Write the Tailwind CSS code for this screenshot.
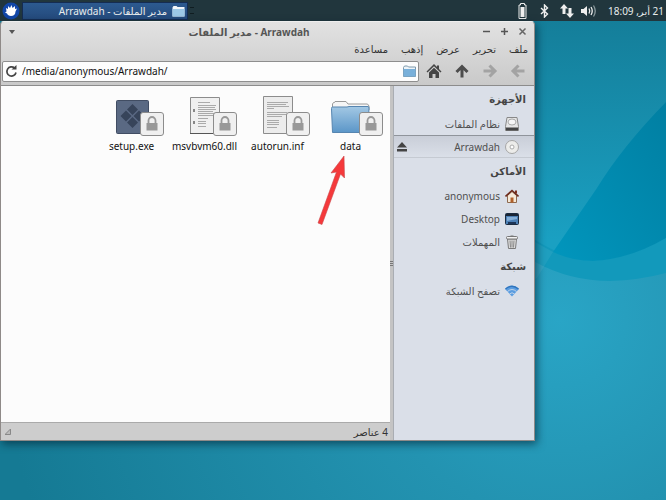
<!DOCTYPE html>
<html lang="ar">
<head>
  <meta charset="UTF-8" />
  <meta name="viewport" content="width=device-width, initial-scale=1.0" />
  <title>Arrawdah - مدير الملفات</title>
  <script src="https://cdn.jsdelivr.net/npm/@tailwindcss/browser@4"></script>
</head>
<body class="relative min-h-screen flex flex-col overflow-hidden bg-[#1c8eac] text-[10px] leading-4 font-['Noto_Sans','DejaVu_Sans',sans-serif]">

  <!-- wallpaper -->
  <svg class="absolute inset-0 w-full h-full" viewBox="0 0 666 500" preserveAspectRatio="none" aria-hidden="true">
    <defs>
      <linearGradient id="sky" x1="0" y1="0" x2="0" y2="1">
        <stop offset="0" stop-color="#147b96" />
        <stop offset="0.48" stop-color="#1aa0c2" />
        <stop offset="1" stop-color="#1aa0c2" />
      </linearGradient>
      <radialGradient id="sea" gradientUnits="userSpaceOnUse" cx="560" cy="320" r="560">
        <stop offset="0" stop-color="#29a5c6" />
        <stop offset="0.35" stop-color="#2393b1" />
        <stop offset="1" stop-color="#157a94" />
      </radialGradient>
      <linearGradient id="lens" x1="1" y1="0" x2="0" y2="1">
        <stop offset="0" stop-color="#017fa2" />
        <stop offset="1" stop-color="#0196bd" />
      </linearGradient>
      <linearGradient id="folder" x1="0" y1="0" x2="0" y2="1">
        <stop offset="0" stop-color="#a3c8e4" />
        <stop offset="1" stop-color="#5b96c8" />
      </linearGradient>
    </defs>
    <rect width="666" height="500" fill="url(#sky)" />
    <path d="M0 240H535Q570 261 593 261Q630 258 666 238V500H0Z" fill="#1299bb" />
    <path d="M0 262H535Q570 281 610 281Q640 280 666 273V500H0Z" fill="url(#sea)" />
    <path d="M666 102Q622 147 597 188L553 252Q572 261 593 261Q630 259 666 238Z" fill="url(#lens)" />
    <path d="M535 242L553 252L537 278L535 279Z" fill="#fff" opacity="0.06" />
  </svg>

  <!-- panel -->
  <header dir="ltr" class="relative flex h-[21px] items-center bg-[#21363d] text-[#e8ecec]">
    <button aria-label="Menu" class="ml-[2px] w-[18px] h-[18px]">
      <svg viewBox="0 0 18 18">
        <circle cx="9" cy="9" r="8.500" fill="#1147a8" />
        <path d="M4 6l2 1 0-3 2 2 1.500-3 1 3 2.500-2 0 3 2-.5-1.500 3c0 3-2 4.500-4.500 4.500-2 0-3.500-1-4-2.500l-2-1 1.500-1z" fill="#fff" />
      </svg>
    </button>
    <button class="ml-[2px] flex h-[18px] w-[166px] items-center justify-end gap-[5px] border border-[#152c52] bg-linear-to-b from-[#2c5a90] to-[#244a7c] pr-[2px]">
      <span dir="ltr">Arrawdah - مدير الملفات</span>
      <svg class="w-[13px] h-[12px]" viewBox="0 0 13 12">
        <path d="M.5 11.500V2.500L1.500 1h3l1 1h7v9.500z" fill="#f2f6fa" />
        <path d="M.5 4h12v7.500H.5z" fill="#9cc8e6" />
      </svg>
    </button>
    <span class="ml-[2px] w-[4px] h-[7px] border-y border-[#101d21]"></span>

    <div class="ml-auto flex items-center pr-[2px]">
      <svg class="w-[9px] h-4 mr-[13px]" viewBox="0 0 9 16">
        <path d="M2.500 .5h4v1.500h1.500v13.500H1V2h1.500z" fill="none" stroke="#eee" />
        <path d="M2.500 4h4v10h-4z" fill="#eee" />
      </svg>
      <svg class="w-[9px] h-[14px] mr-[11px]" viewBox="0 0 9 14">
        <path d="M1 4l6.500 6L4.500 13V1l3 3L1 10" fill="none" stroke="#eee" stroke-width="1.400" />
      </svg>
      <svg class="w-[14px] h-[14px] mr-[7px]" viewBox="0 0 14 14">
        <path d="M4 0l4 4.500H5.500V10h-3V4.500H0zM10 14L6 9.500h2.500V4h3v5.500H14z" fill="#eee" />
      </svg>
      <svg class="w-[16px] h-[12px] mr-[11px]" viewBox="0 0 16 12" fill="none" stroke-width="1.300">
        <path d="M0 4h2.500L6 1v10L2.500 8H0z" fill="#eee" />
        <path d="M8 3.500q1.500 2.500 0 5M10 2q2.500 4 0 8" stroke="#eee" />
        <path d="M12.500 .5q3.500 5.500 0 11" stroke="#8b999d" />
      </svg>
      <time dir="rtl">21 أبر, 18:09</time>
    </div>
  </header>

  <!-- desktop area with the file manager window -->
  <main class="relative flex flex-1 pr-[131px] pb-[59px]">
    <section dir="rtl" class="flex flex-1 flex-col rounded-t-[4px] border border-t-[#eee] border-[#8f8a88] bg-[#cdcdcd] shadow-[2px_3px_9px_rgba(0,30,45,.6)] text-[#333]">
      <div class="rounded-t-[4px] bg-linear-to-b from-[#e2e2e2] to-[#c9c9c9]">
        <!-- title bar -->
        <div class="flex h-[19px] items-center justify-between px-[7px] text-[#555]">
          <div class="flex items-center gap-[9px]">
            <button aria-label="إغلاق"><svg class="w-[9px] h-[9px]" viewBox="0 0 9 9"><path d="M1.500 1.500l6 6m0-6l-6 6" stroke="#666" stroke-width="1.500" /></svg></button>
            <button aria-label="تكبير"><svg class="w-[9px] h-[9px]" viewBox="0 0 9 9"><path d="M1 4.500h7M4.500 1v7" stroke="#555" stroke-width="1.500" /></svg></button>
            <button aria-label="تصغير"><svg class="w-[9px] h-[9px]" viewBox="0 0 9 9"><path d="M1 4.500h7" stroke="#555" stroke-width="1.500" /></svg></button>
          </div>
          <h1 class="font-bold">Arrawdah - مدير الملفات</h1>
          <button aria-label="قائمة النافذة"><svg class="w-[8px] h-[8px]" viewBox="0 0 8 8"><path d="M1 2h6L4 6z" fill="#555" /></svg></button>
        </div>
        <!-- menu bar -->
        <nav class="flex h-4 items-center gap-[13px] pr-[6px]">
          <button>ملف</button>
          <button>تحرير</button>
          <button>عرض</button>
          <button>إذهب</button>
          <button>مساعدة</button>
        </nav>
        <!-- toolbar -->
        <div class="flex h-[29px] items-center border-b border-[#8c8c8c] pr-[8px] pl-px">
          <div class="flex items-center gap-[12px]">
            <button aria-label="السابق"><svg class="w-4 h-4" viewBox="0 0 16 16"><path d="M14.500 8H4M8.500 2.500L3 8l5.500 5.500" fill="none" stroke="#a3a3a3" stroke-width="3" /></svg></button>
            <button aria-label="التالي"><svg class="w-4 h-4" viewBox="0 0 16 16"><path d="M1.500 8H12M7.500 2.500L13 8l-5.500 5.500" fill="none" stroke="#a3a3a3" stroke-width="3" /></svg></button>
            <button aria-label="أعلى"><svg class="w-4 h-4" viewBox="0 0 16 16"><path d="M8 14.500V4M2.500 9L8 3.500 13.500 9" fill="none" stroke="#4d4d4d" stroke-width="3" /></svg></button>
            <button aria-label="المنزل"><svg class="w-4 h-4" viewBox="0 0 16 16"><path d="M8 1L0.500 8.500l1 1L8 3.200l6.500 6.300 1-1L13 6V2.500h-2V4zM3 9.500L8 4.800l5 4.700V15H9.500v-4h-3v4H3z" fill="#454545" /></svg></button>
          </div>
          <div dir="ltr" class="mr-[7px] flex h-[21px] flex-1 items-center rounded-[2px] border border-[#8e8e8e] bg-[#fdfdfd] px-[2px]">
            <svg class="w-[13px] h-[13px] shrink-0" viewBox="0 0 13 13"><path d="M9.500 3A4.600 4.600 0 1 0 11 7.500" fill="none" stroke="#444" stroke-width="1.700" /><path d="M6.500 4.500h5V0z" fill="#444" /></svg>
            <input type="text" aria-label="المسار" value="/media/anonymous/Arrawdah/" class="ml-[4px] min-w-0 flex-1 bg-transparent text-[#111] outline-none" />
            <svg class="w-[13px] h-[12px]" viewBox="0 0 13 12">
              <path d="M.5 11.500V2.500L1.500 1h3l1 1h7v9.500z" fill="#eef4f8" stroke="#7d98ab" />
              <path d="M.5 4h12v7.500H.5z" fill="#79b0da" />
            </svg>
          </div>
        </div>
      </div>

      <div class="flex flex-1">
        <!-- places -->
        <aside class="w-[141px] shrink-0 border-l border-[#a9adb3] bg-[#dadfe8] text-[#505050]">
          <h2 class="flex h-[26px] items-center pr-[8px] font-bold text-[#444]">الأجهزة</h2>
          <ul>
            <li class="flex h-[23px] items-center gap-[5px] pr-[15px]">
              <svg class="w-[14px] h-[14px]" viewBox="0 0 14 14"><path d="M2 .5h10l1.500 9v4H.5v-4z" fill="#e6e6e6" stroke="#888" /><ellipse cx="7" cy="5" rx="4" ry="3" fill="#f6f6f6" stroke="#aaa" /><path d="M1 10.500h12v3H1z" fill="#444" /></svg>
              <a href="#">نظام الملفات</a>
            </li>
            <li class="flex h-[23px] items-center gap-[5px] border-t border-b border-t-[#8f949b] border-b-[#c5cad2] bg-linear-to-b from-[#c9ced8] to-[#dadfe8] pr-[15px] pl-[3px]">
              <svg class="w-[14px] h-[14px]" viewBox="0 0 14 14"><circle cx="7" cy="7" r="6.500" fill="#ececea" stroke="#a5a5a5" /><circle cx="7" cy="7" r="2" fill="#fff" stroke="#aaa" /></svg>
              <a href="#">Arrawdah</a>
              <button aria-label="إخراج" class="mr-auto"><svg class="w-[10px] h-[10px]" viewBox="0 0 10 10"><path d="M5 0l5 5.500H0zM0 7h10v2.500H0z" fill="#444" /></svg></button>
            </li>
          </ul>
          <h2 class="flex h-[26px] items-center pr-[8px] font-bold text-[#444]">الأماكن</h2>
          <ul>
            <li class="flex h-[23px] items-center gap-[5px] pr-[15px]">
              <svg class="w-[14px] h-[14px]" viewBox="0 0 14 14"><path d="M2.500 6.500L7 2.500l4.500 4v7h-9z" fill="#f5e9d8" stroke="#8d6a50" /><path d="M10 1.500h2v3h-2z" fill="#7c2f1d" /><path d="M.5 7.500L7 1.500l6.500 6" fill="none" stroke="#6e2b1c" stroke-width="1.600" /><path d="M5.500 8.500h3v5h-3z" fill="#b0602b" /></svg>
              <a href="#">anonymous</a>
            </li>
            <li class="flex h-[23px] items-center gap-[5px] pr-[15px]">
              <svg class="w-[14px] h-[12px]" viewBox="0 0 14 12"><rect x=".5" y=".5" width="13" height="11" rx="1" fill="#4b7fb5" stroke="#1c2c40" /><path d="M1 1h12v2H1z" fill="#1a2535" /><path d="M3 9h8v2H3z" fill="#1d3557" /><path d="M2 4h10v2L2 8z" fill="#85afd8" /></svg>
              <a href="#">Desktop</a>
            </li>
            <li class="flex h-[23px] items-center gap-[5px] pr-[15px]">
              <svg class="w-[14px] h-[14px]" viewBox="0 0 14 14"><path d="M2.500 4h9l-1 9.500h-7z" fill="#ddd" stroke="#7a7a7a" /><path d="M5 5.500l.5 7M7 5.500v7M9 5.500l-.5 7" stroke="#888" /><rect x="1.500" y="1.500" width="11" height="2.500" rx="1" fill="#f2f2f2" stroke="#777" /><path d="M5.500 1h3" stroke="#777" /></svg>
              <a href="#">المهملات</a>
            </li>
          </ul>
          <h2 class="flex h-[26px] items-center pr-[8px] font-bold text-[#444]">شبكة</h2>
          <ul>
            <li class="flex h-[23px] items-center gap-[5px] pr-[15px]">
              <svg class="w-[14px] h-[12px]" viewBox="0 0 14 12"><path d="M0 4Q7-2.500 14 4L7 11.500z" fill="#5b9de0" /><path d="M.5 4Q7-1.500 13.500 4" fill="none" stroke="#2f75bf" stroke-width="1.500" /><path d="M2.500 6.500Q7 2.500 11.500 6.500M4.500 9Q7 6.500 9.500 9" fill="none" stroke="#dadfe8" stroke-width=".8" /></svg>
              <a href="#">تصفح الشبكة</a>
            </li>
          </ul>
        </aside>

        <!-- pane handle -->
        <div class="flex w-[3px] shrink-0 flex-col items-center justify-center gap-px bg-[#c4c4c4]">
          <span class="h-px w-full bg-[#777]"></span>
          <span class="h-px w-full bg-[#777]"></span>
          <span class="h-px w-full bg-[#777]"></span>
        </div>

        <div class="flex min-w-0 flex-1 flex-col">
          <div class="relative flex-1 border-b border-[#aaa] bg-[#fcfcfc]">
            <ul class="flex flex-wrap pt-[10px] pr-[3px] text-[#111]">
              <li class="flex w-[73px] flex-col items-center">
                <div class="relative h-[42px] w-[48px]">
                  <svg class="w-[48px] h-[42px]" viewBox="0 0 48 42">
                    <path d="M5.500 12V8l1-1.500h1L8 5.500h11l2 2.500h19.500l1.500 2v4H5.500z" fill="#f6f6f6" stroke="#9a9a9a" />
                    <path d="M4.500 12.500q0-1.500 1-1.500H20l2-.5h19q1 0 1 1.500l-1 24.500H5.500z" fill="url(#folder)" stroke="#5685b0" />
                  </svg>
                  <svg class="absolute top-[16px] right-[-8px] w-6 h-6" viewBox="0 0 24 24"><rect x=".5" y=".5" width="23" height="23" rx="2.500" fill="#f0f0f0" stroke="#8c8c8c" /><path d="M8.500 11V8.500a3.500 3.500 0 0 1 7 0V11" fill="none" stroke="#999" stroke-width="1.800" /><path d="M6.500 11h11v7.500h-11z" fill="#989898" /></svg>
                </div>
                <a href="#">data</a>
              </li>
              <li class="flex w-[73px] flex-col items-center">
                <div class="relative h-[42px] w-[48px]">
                  <svg class="w-[48px] h-[42px]" viewBox="0 0 48 42">
                    <path d="M9.500 .5h29v37h-29z" fill="#ececec" stroke="#8c8c8c" />
                    <path d="M13 6.500h21M13 8.500h19M13 10.500h22M13 12.500h7M13 16.500h20M13 18.500h22M13 20.500h15M13 24.500h12M13 26.500h12M13 28.500h12M13 31.500h10" stroke="#aaa" />
                  </svg>
                  <svg class="absolute top-[16px] right-[-8px] w-6 h-6" viewBox="0 0 24 24"><rect x=".5" y=".5" width="23" height="23" rx="2.500" fill="#f0f0f0" stroke="#8c8c8c" /><path d="M8.500 11V8.500a3.500 3.500 0 0 1 7 0V11" fill="none" stroke="#999" stroke-width="1.800" /><path d="M6.500 11h11v7.500h-11z" fill="#989898" /></svg>
                </div>
                <a href="#">autorun.inf</a>
              </li>
              <li class="flex w-[73px] flex-col items-center">
                <div class="relative h-[42px] w-[48px]">
                  <svg class="w-[48px] h-[42px]" viewBox="0 0 48 42">
                    <path d="M9.500 1.500h29v36h-29z" fill="#f0f0f0" stroke="#8c8c8c" />
                    <path d="M9 37.500h30" stroke="#555" />
                    <path d="M17 6.500h12M17 9.500h18M17 11.500h17M17 13.500h18M17 15.500h15M17 17.500h18M17 19.500h16M17 22.500h10M17 25.500h8M17 27.500h8M17 30.500h8" stroke="#aaa" />
                    <path d="M13 13v3M13 25v3" stroke="#666" stroke-width="1.500" />
                  </svg>
                  <svg class="absolute top-[16px] right-[-8px] w-6 h-6" viewBox="0 0 24 24"><rect x=".5" y=".5" width="23" height="23" rx="2.500" fill="#f0f0f0" stroke="#8c8c8c" /><path d="M8.500 11V8.500a3.500 3.500 0 0 1 7 0V11" fill="none" stroke="#999" stroke-width="1.800" /><path d="M6.500 11h11v7.500h-11z" fill="#989898" /></svg>
                </div>
                <a href="#">msvbvm60.dll</a>
              </li>
              <li class="flex w-[73px] flex-col items-center">
                <div class="relative h-[42px] w-[48px]">
                  <svg class="w-[48px] h-[42px]" viewBox="0 0 48 42">
                    <rect x="8.500" y="4.500" width="32" height="33" rx="1" fill="#5a6983" stroke="#414d63" />
                    <path d="M24.500 8l5.500 5.500-5.500 5.500-5.500-5.500zM18 14.500l5.500 5.500-5.500 5.500-5.500-5.500zM31 14.500l5.500 5.500-5.500 5.500-5.500-5.500zM24.500 21l5.500 5.500-5.500 5.500-5.500-5.500z" fill="#37445a" />
                  </svg>
                  <svg class="absolute top-[16px] right-[-8px] w-6 h-6" viewBox="0 0 24 24"><rect x=".5" y=".5" width="23" height="23" rx="2.500" fill="#f0f0f0" stroke="#8c8c8c" /><path d="M8.500 11V8.500a3.500 3.500 0 0 1 7 0V11" fill="none" stroke="#999" stroke-width="1.800" /><path d="M6.500 11h11v7.500h-11z" fill="#989898" /></svg>
                </div>
                <a href="#">setup.exe</a>
              </li>
            </ul>
            <!-- arrow pointing at the data folder -->
            <svg class="absolute top-[70px] right-[43px] w-[30px] h-[70px]" viewBox="0 0 30 70"><path d="M27 0L14 17l5.500-1L1 67l4 1.500L23.500 18l4 4z" fill="#f5393b" stroke="#c9474a" stroke-width=".6" /></svg>
          </div>
          <!-- status bar -->
          <footer class="flex h-[17px] items-center justify-between pr-[2px] pl-[4px]">
            <span>4 عناصر</span>
            <svg class="w-[6px] h-[6px]" viewBox="0 0 6 6"><path d="M0 5.500h5.500V0z" fill="#bbb" stroke="#888" /></svg>
          </footer>
        </div>
      </div>
    </section>
  </main>
</body>
</html>
